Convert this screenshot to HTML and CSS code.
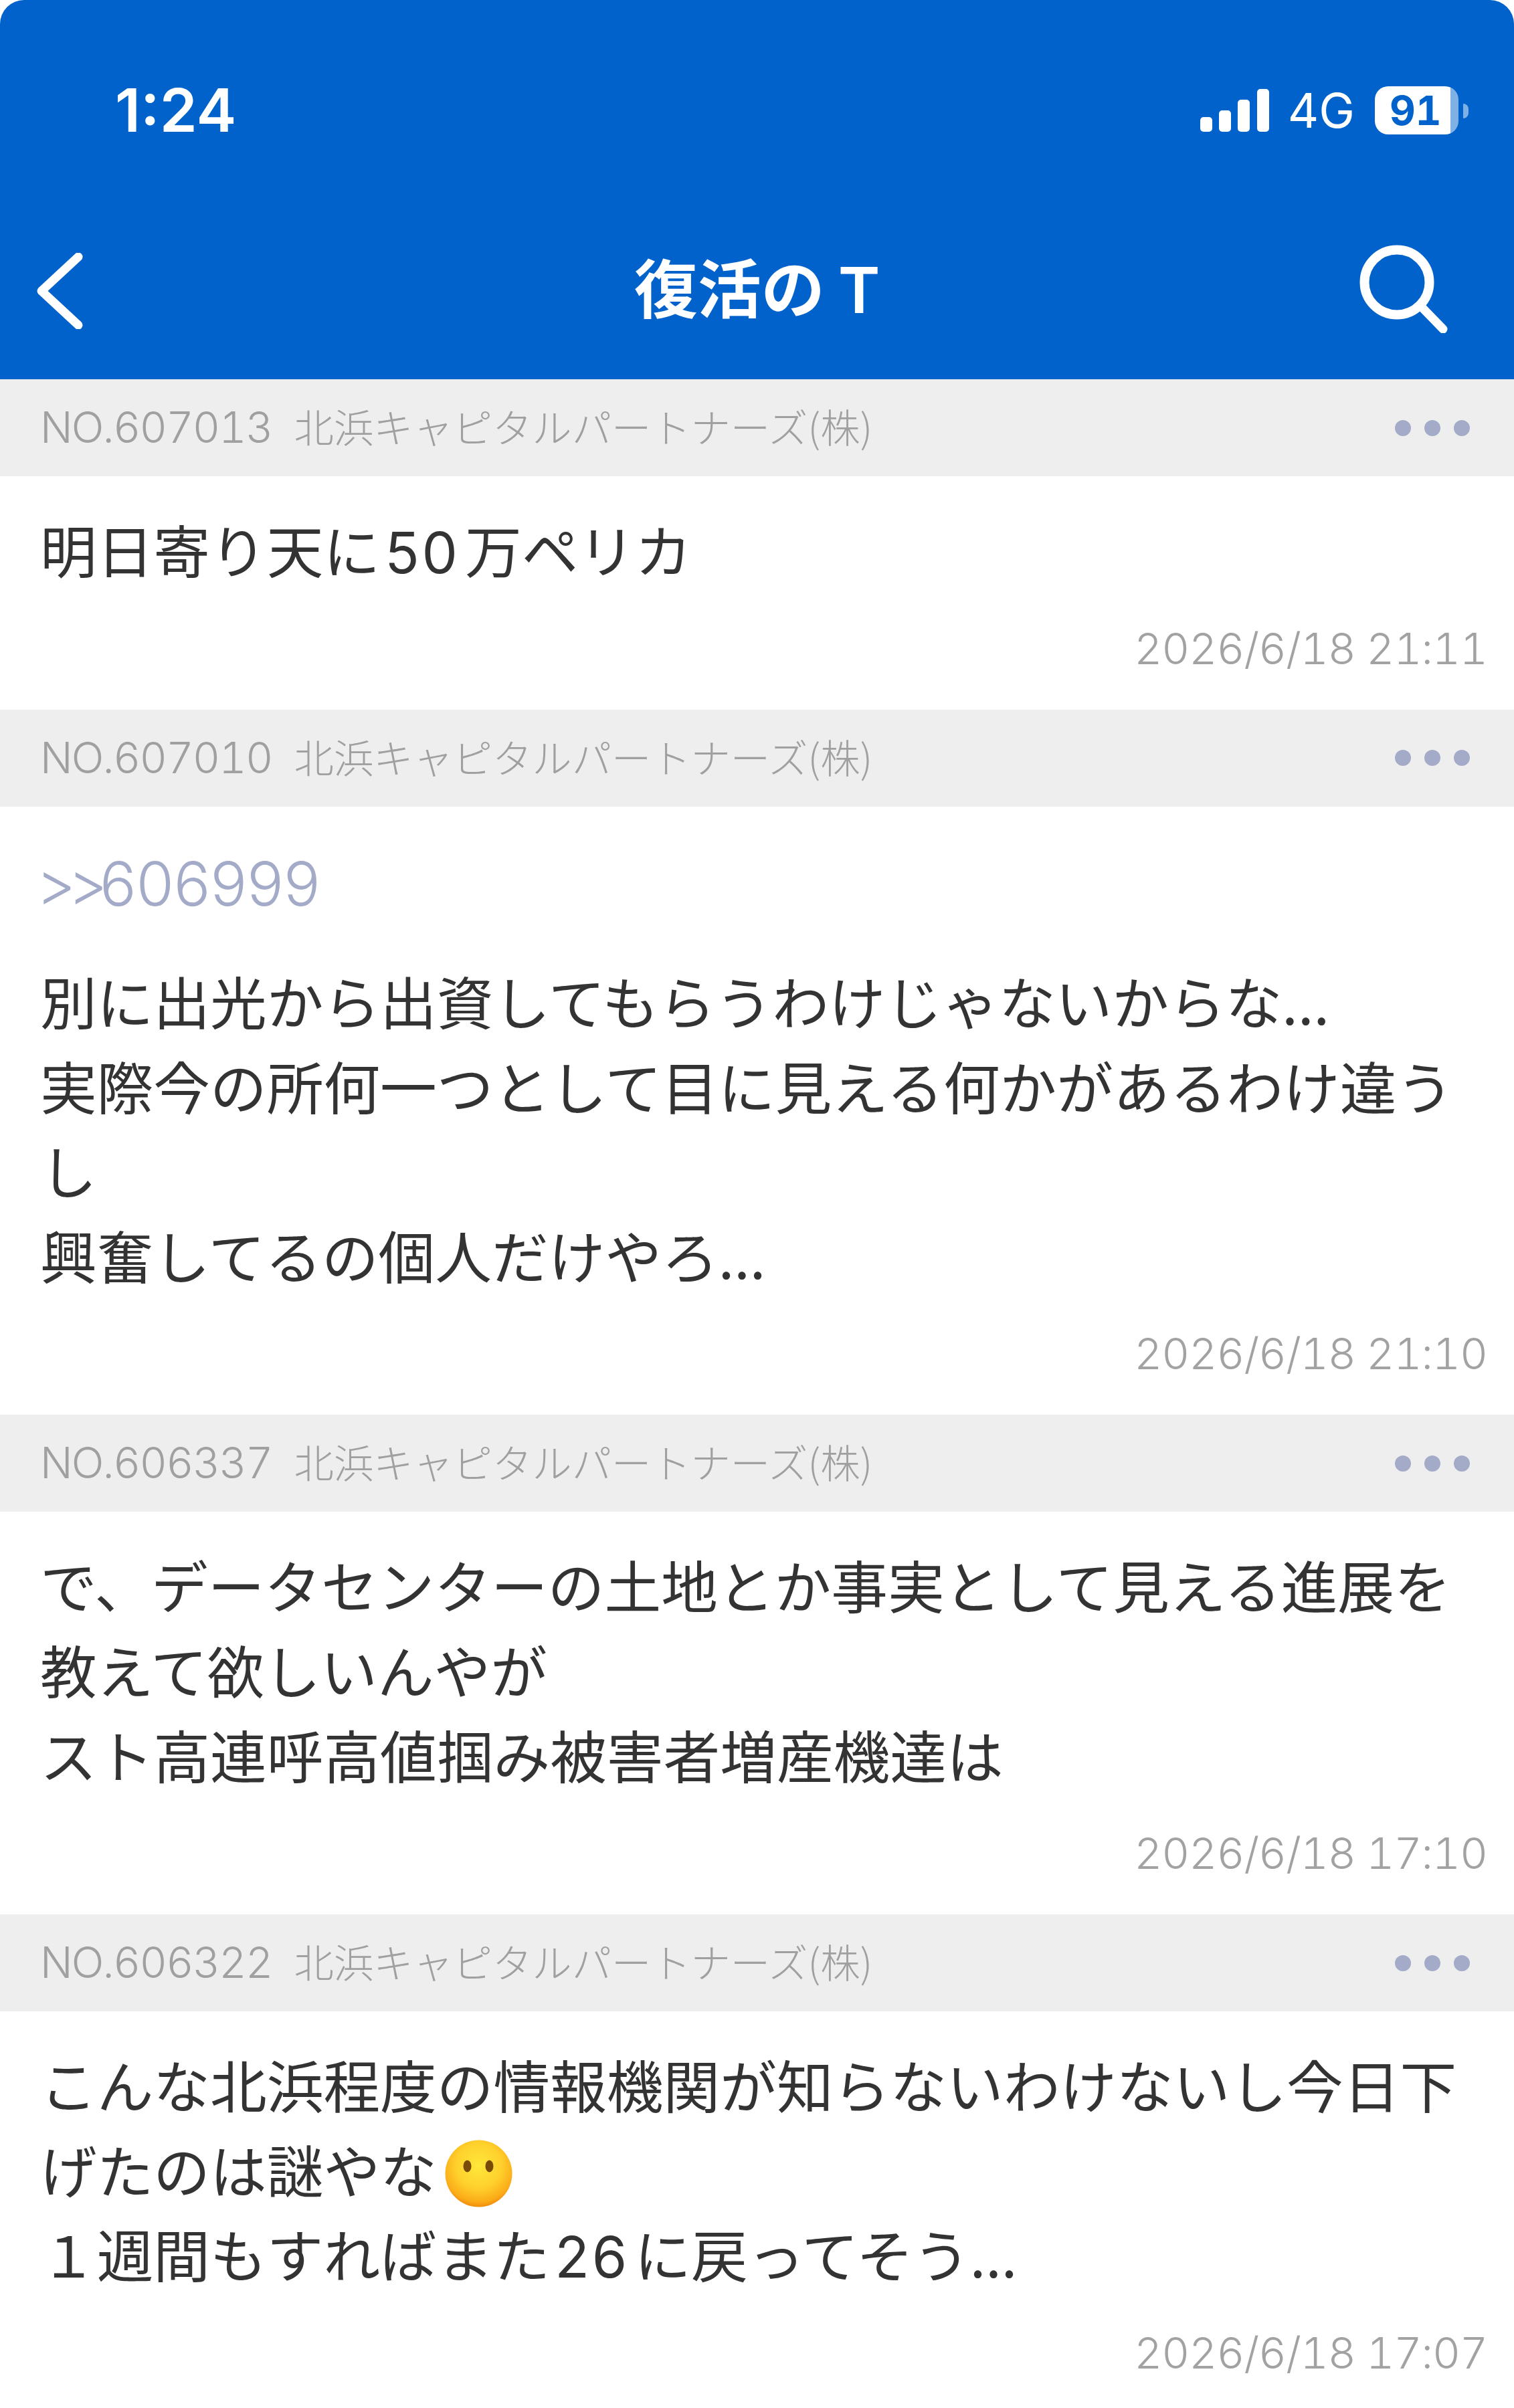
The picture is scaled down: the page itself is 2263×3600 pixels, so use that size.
FILE: index.html
```html
<!DOCTYPE html>
<html lang="ja">
<head>
<meta charset="utf-8">
<title>復活のT</title>
<link rel="stylesheet" href="styles.css">
</head>
<body>
<div class="screen">
  <header class="top">
    <div class="status">
      <span class="time">1:24</span>
      <div class="indicators">
        <svg class="signal" viewBox="0 0 103 64" width="103" height="64"><rect x="0" y="42" width="18" height="22" rx="5"/><rect x="28" y="32" width="18" height="32" rx="5"/><rect x="56" y="16" width="18" height="48" rx="5"/><rect x="85" y="0" width="18" height="64" rx="5"/></svg>
        <span class="net">4G</span>
        <div class="battery">91</div>
      </div>
    </div>
    <nav class="nav">
      <div class="nav-left">
        <svg width="69" height="114" viewBox="0 0 69 114"><path d="M62 6 L7 57 L62 108" fill="none" stroke="#fff" stroke-width="13" stroke-linecap="round" stroke-linejoin="round"/></svg>
      </div>
      <h1 class="title">復活の<span class="title-t">T</span></h1>
      <div class="nav-right">
        <svg width="132" height="132" viewBox="0 0 132 132"><circle cx="56" cy="56" r="48.5" fill="none" stroke="#fff" stroke-width="14"/><path d="M92 92 L125 126" fill="none" stroke="#fff" stroke-width="13" stroke-linecap="round"/></svg>
      </div>
    </nav>
  </header>

  <article class="post">
    <div class="post-head">
      <div class="meta"><span class="no">NO.607013</span><span class="user">北浜キャピタルパートナーズ(株)</span></div>
      <div class="dots"><i></i><i></i><i></i></div>
    </div>
    <div class="post-body">
      <p class="msg">明日寄り天に<span class="num">50</span>万ペリカ</p>
      <div class="date">2026/6/18 21:11</div>
    </div>
  </article>

  <article class="post">
    <div class="post-head">
      <div class="meta"><span class="no">NO.607010</span><span class="user">北浜キャピタルパートナーズ(株)</span></div>
      <div class="dots"><i></i><i></i><i></i></div>
    </div>
    <div class="post-body">
      <p class="quote"><span class="gt">&gt;&gt;</span>606999</p>
      <p class="msg">別に出光から出資してもらうわけじゃないからな...<br>実際今の所何一つとして目に見える何かがあるわけ違う<br>し<br>興奮してるの個人だけやろ...</p>
      <div class="date">2026/6/18 21:10</div>
    </div>
  </article>

  <article class="post">
    <div class="post-head">
      <div class="meta"><span class="no">NO.606337</span><span class="user">北浜キャピタルパートナーズ(株)</span></div>
      <div class="dots"><i></i><i></i><i></i></div>
    </div>
    <div class="post-body">
      <p class="msg">で、データセンターの土地とか事実として見える進展を<br>教えて欲しいんやが<br>スト高連呼高値掴み被害者増産機達は</p>
      <div class="date">2026/6/18 17:10</div>
    </div>
  </article>

  <article class="post">
    <div class="post-head">
      <div class="meta"><span class="no">NO.606322</span><span class="user">北浜キャピタルパートナーズ(株)</span></div>
      <div class="dots"><i></i><i></i><i></i></div>
    </div>
    <div class="post-body">
      <p class="msg">こんな北浜程度の情報機関が知らないわけないし今日下<br>げたのは謎やな<svg class="emoji" width="101" height="101" viewBox="0 0 101 101"><defs><radialGradient id="face" cx="50%" cy="38%" r="62%"><stop offset="0%" stop-color="#ffe83a"/><stop offset="55%" stop-color="#ffd02c"/><stop offset="88%" stop-color="#fbab18"/><stop offset="100%" stop-color="#ef8c0a"/></radialGradient></defs><circle cx="50.5" cy="50.5" r="50" fill="url(#face)"/><ellipse cx="33.5" cy="39.5" rx="6" ry="9" fill="#7a4a08"/><ellipse cx="66.5" cy="39.5" rx="6" ry="9" fill="#7a4a08"/></svg><br>１週間もすればまた<span class="num">26</span>に戻ってそう...</p>
      <div class="date">2026/6/18 17:07</div>
    </div>
  </article>
</div>
</body>
</html>
```
FILE: styles.css
```css
* { box-sizing: border-box; }
html, body { margin: 0; padding: 0; background: #fff; }
body { height: 3600px; overflow: hidden; font-family: "Noto Sans CJK JP", "Noto Sans", sans-serif; }
.screen { width: 2263px; }

.top {
  height: 567px;
  padding-top: 120px;
  background: #0062ca;
  border-radius: 36px 36px 0 0;
  color: #fff;
}
.status {
  height: 90px;
  margin-bottom: 87px;
  padding: 0 83px 0 172px;
  display: flex;
  align-items: center;
  justify-content: space-between;
}
.time { font-family: Inter, sans-serif; font-weight: 600; font-size: 90px; line-height: 90px; }
.indicators { display: flex; align-items: center; }
.signal { fill: #fff; margin-right: 28px; }
.net { font-family: Inter, sans-serif; font-size: 72px; line-height: 72px; margin-right: 30px; }
.battery {
  position: relative;
  width: 125px;
  height: 72px;
  border-radius: 20px;
  background: linear-gradient(to right, #fff 113px, rgba(255,255,255,.5) 113px);
  color: #0062ca;
  font-family: Inter, sans-serif;
  font-weight: 700;
  font-size: 60px;
  font-variant-numeric: tabular-nums;
  line-height: 72px;
  padding-left: 22px;
}
.battery::after {
  content: "";
  position: absolute;
  left: 132px;
  top: 26px;
  width: 8px;
  height: 22px;
  border-radius: 0 11px 11px 0;
  background: rgba(255,255,255,.5);
}

.nav {
  height: 270px;
  display: grid;
  grid-template-columns: 1fr auto 1fr;
  align-items: center;
}
.nav-left { padding: 6px 0 0 55px; display: flex; }
.nav-right { padding-right: 99px; display: flex; justify-content: flex-end; }
.title { margin: 0; font-size: 95px; font-weight: 700; line-height: 120px; padding-bottom: 4px; }
.title-t { font-family: Inter, sans-serif; font-weight: 600; margin-left: 20px; }

.post-head {
  height: 145px;
  padding: 0 66px 0 60px;
  background: #eee;
  display: flex;
  align-items: center;
  justify-content: space-between;
}
.meta { font-weight: 300; font-size: 59.3px; color: #a0a0a0; display: flex; align-items: baseline; gap: 33px; padding-bottom: 7px; }
.no { font-family: Inter, "Noto Sans CJK JP", sans-serif; font-size: 64px; font-variant-numeric: tabular-nums; letter-spacing: -1.8px; }
.dots { display: flex; gap: 20px; }
.dots i { width: 24px; height: 24px; border-radius: 50%; background: #a3abc9; }

.post-body { padding: 45px 40px 51px 60px; }
.msg { margin: 0; font-size: 84.7px; line-height: 126.6px; color: #333; white-space: nowrap; }
.num { font-family: Inter, sans-serif; font-weight: 400; letter-spacing: 4px; padding: 0 7px; line-height: 1; }
.quote { margin: 0 0 48.5px; padding-top: 7px; font-family: Inter, sans-serif; font-weight: 300; font-size: 91px; line-height: 126px; color: #a3abc9; }
.gt { letter-spacing: -12px; margin-left: -6px; }
.date { margin-top: 46px; height: 80px; font-family: Inter, "Noto Sans CJK JP", sans-serif; font-weight: 300; font-size: 65px; letter-spacing: -1px; font-variant-numeric: tabular-nums; line-height: 80px; color: #a2a2a2; text-align: right; }
.emoji { vertical-align: -21px; margin-left: 12px; }
```
